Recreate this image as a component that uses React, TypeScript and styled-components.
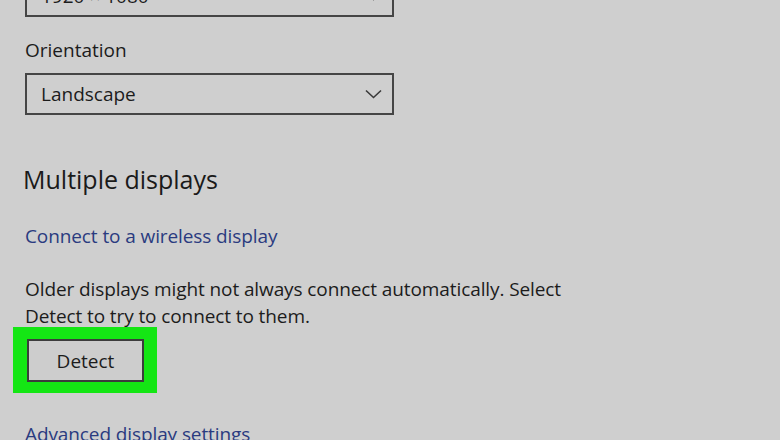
import React from "react";
import styled, { createGlobalStyle } from "styled-components";

const Global = createGlobalStyle`
  html, body { margin: 0; padding: 0; background: #cfcfcf; }
  body { font-family: "Open Sans", "Noto Sans", sans-serif; color: #1c1c1c; }
`;

const Page = styled.div`
  width: 780px;
  height: 440px;
  overflow: hidden;
  background: #cfcfcf;
  box-sizing: border-box;
  padding: 0 25px;
`;

const Content = styled.div`
  margin-top: -25px;
  display: flex;
  flex-direction: column;
  align-items: flex-start;
`;

const Select = styled.div<{ $mt?: number }>`
  box-sizing: border-box;
  width: 369px;
  height: 42px;
  margin-top: ${(p) => p.$mt ?? 0}px;
  border: 2px solid #454545;
  display: flex;
  align-items: center;
  justify-content: space-between;
  padding: 0 10px 0 14px;
  font-size: 19px;
  color: #1c1c1c;
`;

const Label = styled.div<{ $mt: number }>`
  margin-top: ${(p) => p.$mt}px;
  font-size: 19px;
  line-height: 26px;
`;

const Heading = styled.div`
  margin-top: 47px;
  margin-left: -2px;
  font-size: 25px;
  line-height: 34px;
  color: #1a1a1a;
`;

const Link = styled.a<{ $mt: number }>`
  margin-top: ${(p) => p.$mt}px;
  font-size: 19px;
  line-height: 26px;
  letter-spacing: -0.1px;
  color: #2a3b80;
  text-decoration: none;
`;

const Para = styled.p`
  margin: 27px 0 0;
  width: 560px;
  font-size: 19px;
  line-height: 27px;
  letter-spacing: -0.1px;
`;

const Highlight = styled.div`
  margin-top: -3px;
  margin-left: -12px;
  padding: 12px 13px 11px 14px;
  background: #14e614;
`;

const Button = styled.div`
  box-sizing: border-box;
  width: 117px;
  height: 43px;
  border: 2px solid #3c3c3c;
  background: #cdcdcd;
  display: flex;
  align-items: center;
  justify-content: center;
  font-size: 19px;
  color: #1c1c1c;
`;

const Chevron = () => (
  <svg width="17" height="10" viewBox="0 0 17 10" fill="none">
    <path d="M1 1.5 L8.5 8.5 L16 1.5" stroke="#3a3a3a" strokeWidth="1.6" />
  </svg>
);

export default function App() {
  return (
    <Page>
      <Global />
      <Content>
        <Select>
          <span>1920 × 1080</span>
          <Chevron />
        </Select>
        <Label $mt={20}>Orientation</Label>
        <Select $mt={10}>
          <span>Landscape</span>
          <Chevron />
        </Select>
        <Heading>Multiple displays</Heading>
        <Link $mt={27} href="#">Connect to a wireless display</Link>
        <Para>
          Older displays might not always connect automatically. Select Detect
          to try to connect to them.
        </Para>
        <Highlight>
          <Button>Detect</Button>
        </Highlight>
        <Link $mt={28} href="#">Advanced display settings</Link>
      </Content>
    </Page>
  );
}
